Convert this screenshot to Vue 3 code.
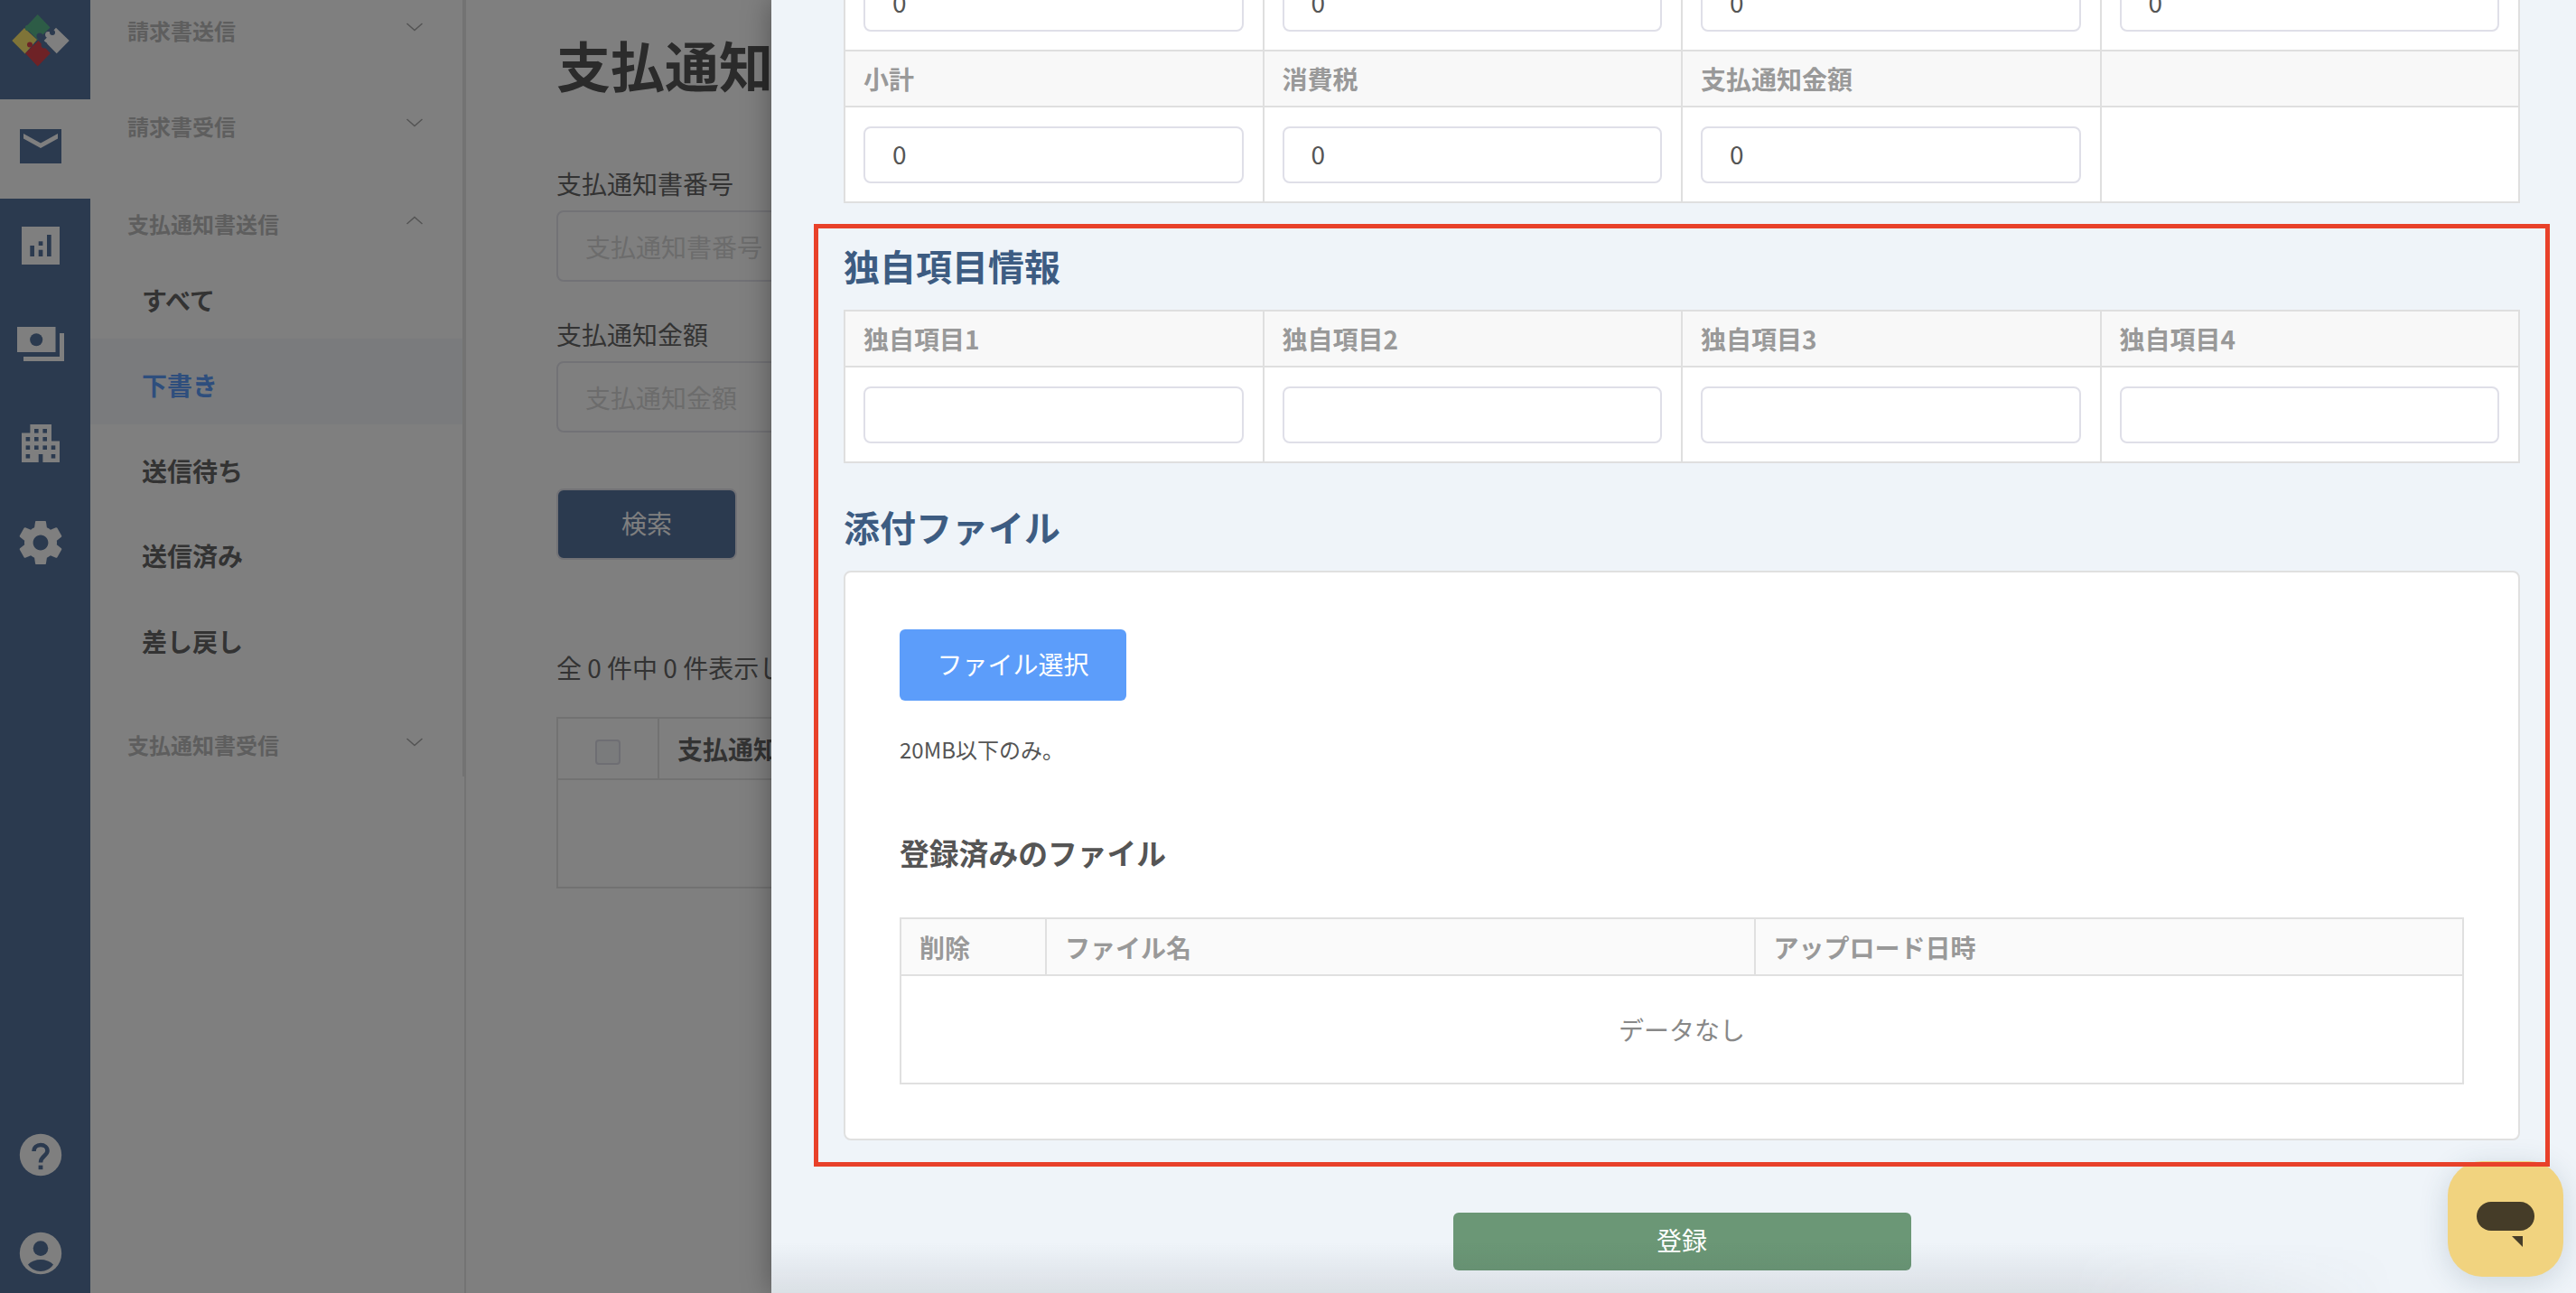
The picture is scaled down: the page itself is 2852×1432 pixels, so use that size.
<script setup>
const navGroups = [
  { title: '請求書送信', open: false },
  { title: '請求書受信', open: false },
  {
    title: '支払通知書送信',
    open: true,
    items: [
      { label: 'すべて' },
      { label: '下書き', active: true },
      { label: '送信待ち' },
      { label: '送信済み' },
      { label: '差し戻し' },
    ],
  },
  { title: '支払通知書受信', open: false },
]

const totals = [
  { label: '小計', value: '0' },
  { label: '消費税', value: '0' },
  { label: '支払通知金額', value: '0' },
]

const customFields = ['独自項目1', '独自項目2', '独自項目3', '独自項目4']

const buildingWindows = [
  [38, 475], [47.4, 475],
  [28.6, 484], [38, 484], [47.4, 484],
  [28.6, 493.4], [38, 493.4], [47.4, 493.4], [56.7, 493.4],
  [28.6, 503], [56.7, 503],
]

const gearPath =
  'M19.43 12.98c.04-.32.07-.64.07-.98s-.03-.66-.07-.98l2.11-1.65c.19-.15.24-.42.12-.64l-2-3.46c-.12-.22-.39-.3-.61-.22l-2.49 1c-.52-.4-1.08-.73-1.69-.98l-.38-2.65C14.46 2.18 14.25 2 14 2h-4c-.25 0-.46.18-.49.42l-.38 2.65c-.61.25-1.17.59-1.69.98l-2.49-1c-.23-.09-.49 0-.61.22l-2 3.46c-.13.22-.07.49.12.64l2.11 1.65c-.04.32-.07.65-.07.98s.03.66.07.98l-2.11 1.65c-.19.15-.24.42-.12.64l2 3.46c.12.22.39.3.61.22l2.49-1c.52.4 1.08.73 1.69.98l.38 2.65c.03.24.24.42.49.42h4c.25 0 .46-.18.49-.42l.38-2.65c.61-.25 1.17-.59 1.69-.98l2.49 1c.23.09.49 0 .61-.22l2-3.46c.12-.22.07-.49-.12-.64l-2.11-1.65zM12 15.5c-1.93 0-3.5-1.57-3.5-3.5s1.57-3.5 3.5-3.5 3.5 1.57 3.5 3.5-1.57 3.5-3.5 3.5z'
</script>

<template>
  <div class="page">
    <aside class="sidebar">
      <div class="side-item">
        <svg viewBox="5 11 80 80" width="80" height="80">
          <polygon points="41.7,16 55.5,30.5 41.7,44 28,30.5" fill="#5ab98c" />
          <polygon points="27,31 41,44 27.7,59.5 13.3,45" fill="#ffe870" />
          <polygon points="42.5,45 55.8,59 41.7,73.5 28,59" fill="#dc444c" />
          <polygon points="62,30.7 76.7,45 62.7,59.3 48.7,45" fill="#fff" />
          <circle cx="33" cy="49.5" r="3" fill="#dc444c" />
          <circle cx="44" cy="40" r="3.6" fill="#56749e" />
          <circle cx="53.5" cy="38.5" r="3.4" fill="#fff" />
          <circle cx="58" cy="36" r="3" fill="#56749e" />
          <circle cx="49" cy="50" r="3.4" fill="#56749e" />
          <circle cx="31" cy="31" r="3.2" fill="#5ab98c" />
        </svg>
      </div>
      <div class="side-item current">
        <svg viewBox="5 121 80 80" width="80" height="80">
          <rect x="22" y="143" width="46" height="38" fill="#56749e" />
          <polygon points="26,148 45,158.5 64,148 64,153.5 45,164 26,153.5" fill="#fff" />
        </svg>
      </div>
      <div class="side-item">
        <svg viewBox="5 231 80 80" width="80" height="80">
          <rect x="24" y="251" width="42" height="42" fill="#fff" />
          <g fill="#56749e">
            <rect x="33.3" y="272" width="4.7" height="12" />
            <rect x="42.7" y="267.3" width="4.7" height="4.7" />
            <rect x="42.7" y="276.7" width="4.7" height="7.3" />
            <rect x="52" y="260" width="4.7" height="24" />
          </g>
        </svg>
      </div>
      <div class="side-item">
        <svg viewBox="5 341 80 80" width="80" height="80">
          <rect x="19" y="362" width="42.5" height="28" fill="#fff" />
          <circle cx="40.2" cy="376.2" r="7" fill="#56749e" />
          <path d="M66 369h5v31H26v-5h40z" fill="#fff" />
        </svg>
      </div>
      <div class="side-item">
        <svg viewBox="5 451 80 80" width="80" height="80">
          <path d="M33.4 470H57v18.6h9V512H47.4v-9h-4.7v9H24v-32.4h9.4z" fill="#fff" />
          <rect
            v-for="w in buildingWindows"
            :key="w.join()"
            :x="w[0]"
            :y="w[1]"
            width="4.6"
            height="4.6"
            fill="#56749e"
          />
        </svg>
      </div>
      <div class="side-item">
        <svg viewBox="5 561 80 80" width="80" height="80">
          <path transform="translate(16.2 572.2) scale(2.4)" :d="gearPath" fill="#fff" />
        </svg>
      </div>
      <div class="side-foot">
        <svg viewBox="5 1239 80 80" width="80" height="80">
          <circle cx="45" cy="1279" r="23.2" fill="#fff" />
          <path
            d="M37.5 1275c0-4.2 3.3-7 7.5-7s7.5 2.8 7.5 6.6c0 5.4-7.5 5.6-7.5 12.9"
            fill="none"
            stroke="#56749e"
            stroke-width="4.6"
          />
          <rect x="42.6" y="1290.6" width="4.8" height="4.6" fill="#56749e" />
        </svg>
        <svg viewBox="5 1348 80 80" width="80" height="80">
          <circle cx="45" cy="1388" r="23.2" fill="#fff" />
          <circle cx="45" cy="1382.6" r="8.3" fill="#56749e" />
          <path
            d="M31 1400.5c3.5-3.6 8.7-5.5 14-5.5s10.500 1.900 14 5.500c-3.300 4.700-8.300 7.500-14 7.500s-10.700-2.800-14-7.500z"
            fill="#56749e"
          />
        </svg>
      </div>
    </aside>

    <nav class="nav">
      <div class="nav-list">
        <section v-for="group in navGroups" :key="group.title" class="nav-group">
          <div class="nav-head">
            <span>{{ group.title }}</span>
            <svg class="chev" viewBox="0 0 18 10" width="18" height="10">
              <polyline
                :points="group.open ? '0.5,9 9,1.500 17.500,9' : '0.5,1 9,8.500 17.500,1'"
                fill="none"
                stroke="#a8a8a8"
                stroke-width="1.500"
              />
            </svg>
          </div>
          <a
            v-for="item in group.items"
            :key="item.label"
            class="nav-item"
            :class="{ active: item.active }"
          >{{ item.label }}</a>
        </section>
      </div>
    </nav>

    <main class="main">
      <h1>支払通知書</h1>
      <label class="field-label">支払通知書番号</label>
      <input class="search-input" placeholder="支払通知書番号" />
      <label class="field-label second">支払通知金額</label>
      <input class="search-input" placeholder="支払通知金額" />
      <button class="search-btn" type="button">検索</button>
      <p class="count">全 0 件中 0 件表示しています</p>
      <table class="list-table">
        <thead>
          <tr>
            <th class="check-col"><span class="check"></span></th>
            <th>支払通知書番号</th>
          </tr>
        </thead>
        <tbody>
          <tr><td colspan="2"></td></tr>
        </tbody>
      </table>
    </main>

    <div class="scrim"></div>

    <div class="drawer">
      <table class="grid-table totals">
        <tbody>
          <tr>
            <td v-for="n in 4" :key="n" class="cell first"><input class="cell-input" value="0" /></td>
          </tr>
          <tr>
            <th v-for="t in totals" :key="t.label">{{ t.label }}</th>
            <th></th>
          </tr>
          <tr>
            <td v-for="t in totals" :key="t.label" class="cell"><input class="cell-input" :value="t.value" /></td>
            <td class="cell"></td>
          </tr>
        </tbody>
      </table>

      <div class="highlight">
        <h2>独自項目情報</h2>
        <table class="grid-table">
          <tbody>
            <tr>
              <th v-for="f in customFields" :key="f">{{ f }}</th>
            </tr>
            <tr>
              <td v-for="f in customFields" :key="f" class="cell"><input class="cell-input" /></td>
            </tr>
          </tbody>
        </table>

        <h2 class="attach-title">添付ファイル</h2>
        <div class="attach-card">
          <button class="pick-btn" type="button">ファイル選択</button>
          <p class="note">20MB以下のみ。</p>
          <h3>登録済みのファイル</h3>
          <table class="file-table">
            <thead>
              <tr>
                <th class="del-col">削除</th>
                <th>ファイル名</th>
                <th>アップロード日時</th>
              </tr>
            </thead>
            <tbody>
              <tr><td colspan="3">データなし</td></tr>
            </tbody>
          </table>
        </div>
      </div>

      <button class="save-btn" type="button">登録</button>
      <div class="bottom-fade"></div>
    </div>

    <button class="chat" type="button" aria-label="chat">
      <svg viewBox="0 0 64 50" width="64" height="50">
        <rect x="0" y="0" width="64" height="32" rx="16" fill="#453c28" />
        <polygon points="39,38 51,38 51,50" fill="#453c28" />
      </svg>
    </button>
  </div>
</template>

<style>
html,
body {
  margin: 0;
  height: 100%;
  overflow: hidden;
}
</style>

<style scoped>
.page {
  position: relative;
  display: flex;
  width: 2852px;
  height: 1432px;
  overflow: hidden;
  background: #fff;
  font-family: 'Noto Sans CJK JP', 'Noto Sans', sans-serif;
}

.sidebar {
  width: 100px;
  flex: none;
  display: flex;
  flex-direction: column;
  background: #56749e;
}

.side-item {
  height: 110px;
  box-sizing: border-box;
  padding: 11px 0 0 5px;
}

.side-item svg,
.side-foot svg {
  display: block;
}

.side-item.current {
  background: #fff;
}

.side-foot {
  margin-top: auto;
  padding: 0 0 4px 5px;
  display: flex;
  flex-direction: column;
  gap: 29px;
}

.nav {
  width: 416px;
  flex: none;
  box-sizing: border-box;
  border-right: 2px solid #e6e6e6;
}

.nav-list {
  height: 860px;
  box-sizing: border-box;
  padding-top: 3px;
  border-right: 2px solid #e6e6e6;
}

.nav-group {
  margin-bottom: 42px;
}

.nav-group:nth-child(2) {
  margin-bottom: 44px;
}

.nav-head {
  height: 64px;
  box-sizing: border-box;
  display: flex;
  align-items: center;
  justify-content: space-between;
  padding: 0 44px 4px 41px;
  font-size: 24px;
  font-weight: 700;
  color: #bcbcbc;
}

.chev {
  margin-bottom: 6px;
}

.nav-item {
  display: block;
  height: 94.4px;
  line-height: 103px;
  padding-left: 57px;
  font-size: 28px;
  font-weight: 700;
  color: #666;
}

.nav-item.active {
  background: #f4f6fa;
  color: #5c9dfa;
}

.main {
  flex: 1;
  padding: 31px 0 0 100px;
}

h1 {
  margin: 0 0 72px;
  font-size: 60px;
  line-height: 80px;
  font-weight: 700;
  color: #565656;
}

.field-label {
  display: block;
  font-size: 28px;
  line-height: 40px;
  color: #666;
}

.field-label.second {
  margin-top: 38px;
}

.search-input {
  display: block;
  box-sizing: border-box;
  width: 640px;
  height: 79px;
  margin-top: 10px;
  padding: 0 30px;
  border: 2px solid #e4e4ec;
  border-radius: 8px;
  font: inherit;
  font-size: 28px;
  background: #fff;
}

.search-input::placeholder {
  color: #d8d8d8;
  opacity: 1;
}

.search-btn {
  display: block;
  width: 200px;
  height: 79px;
  margin-top: 62px;
  padding: 0 0 4px;
  border: 2px solid #e4e4ec;
  border-radius: 8px;
  background: #56749e;
  color: #fff;
  font: inherit;
  font-size: 28px;
}

.count {
  margin: 99px 0 0;
  font-size: 28px;
  line-height: 40px;
  color: #666;
}

.list-table {
  margin-top: 35px;
  width: 900px;
  border-collapse: collapse;
  table-layout: fixed;
}

.list-table th,
.list-table td {
  border: 2px solid #e4e4e4;
  text-align: left;
  font-size: 28px;
  color: #666;
}

.list-table th {
  height: 66px;
  padding: 0 20px;
}

.list-table td {
  height: 116px;
}

.check-col {
  width: 110px;
}

.list-table th.check-col {
  padding: 0;
  text-align: center;
}

.check {
  display: inline-block;
  width: 28px;
  height: 28px;
  box-sizing: border-box;
  border: 2px solid #dcdce6;
  border-radius: 4px;
  background: #f4f6f8;
  vertical-align: middle;
}

.scrim {
  position: absolute;
  inset: 0;
  background: rgba(0, 0, 0, 0.5);
}

.drawer {
  position: absolute;
  top: 0;
  right: 0;
  bottom: 0;
  width: 1998px;
  box-sizing: border-box;
  padding: 0 62px 0 80px;
  background: #eff4f9;
  box-shadow: 0 0 30px rgba(0, 0, 0, 0.35);
  overflow: hidden;
}

.grid-table {
  width: 100%;
  border-collapse: collapse;
  table-layout: fixed;
  background: #fff;
}

.grid-table th,
.grid-table td {
  border: 2px solid #dfdfdf;
}

.grid-table th {
  height: 60px;
  padding: 0 20px;
  background: #f8f8f8;
  text-align: left;
  font-size: 28px;
  font-weight: 700;
  color: #999;
}

.grid-table .cell {
  height: 104px;
  padding: 0 21px 0 20px;
}

.totals {
  margin-top: -51px;
}

.cell-input {
  display: block;
  box-sizing: border-box;
  width: 100%;
  height: 63px;
  padding: 0 30px 3px;
  border: 2px solid #dfdfe8;
  border-radius: 8px;
  background: #fff;
  font: inherit;
  font-size: 28px;
  color: #555;
}

.highlight {
  position: relative;
  z-index: 2;
  margin: 23px -33px 0 -33px;
  padding: 11px 28px 24px 28px;
  border: 5px solid #e8412a;
}

h2 {
  margin: 0 0 19px;
  font-size: 40px;
  line-height: 60px;
  font-weight: 700;
  color: #3d5c82;
}

.attach-title {
  margin-top: 40px;
}

.attach-card {
  box-sizing: border-box;
  padding: 63px 60px 60px;
  border: 2px solid #e0e0e0;
  border-radius: 8px;
  background: #fff;
}

.pick-btn {
  display: block;
  width: 251px;
  height: 79px;
  padding: 0 0 4px;
  border: none;
  border-radius: 6px;
  background: #5c9dfa;
  color: #fff;
  font: inherit;
  font-size: 28px;
}

.note {
  margin: 36px 0 0;
  font-size: 24px;
  line-height: 36px;
  color: #555;
}

h3 {
  margin: 72px 0 48px;
  font-size: 32.8px;
  line-height: 48px;
  font-weight: 700;
  color: #555;
}

.file-table {
  width: 100%;
  border-collapse: collapse;
  table-layout: fixed;
}

.file-table th,
.file-table td {
  border: 2px solid #e0e0e0;
}

.file-table th {
  height: 61px;
  padding: 0 20px;
  background: #fafafa;
  text-align: left;
  font-size: 28px;
  font-weight: 700;
  color: #999;
}

.file-table th.del-col {
  width: 119px;
}

.file-table td {
  height: 116px;
  text-align: center;
  font-size: 28px;
  color: #888;
}

.save-btn {
  display: block;
  width: 507px;
  height: 64px;
  margin: 51px auto 0;
  padding: 0 0 4px;
  border: none;
  border-radius: 6px;
  background: #6b9776;
  color: #fff;
  font: inherit;
  font-size: 28px;
}

.bottom-fade {
  position: absolute;
  left: 0;
  bottom: 0;
  width: 1800px;
  height: 56px;
  background: linear-gradient(to top, rgba(40, 50, 60, 0.1), rgba(40, 50, 60, 0));
  -webkit-mask-image: linear-gradient(to right, #000 80%, transparent);
  mask-image: linear-gradient(to right, #000 80%, transparent);
}

.chat {
  position: absolute;
  right: 14px;
  bottom: 18px;
  z-index: 1;
  width: 128px;
  height: 128px;
  padding: 12px 0 0;
  border: none;
  border-radius: 38px;
  background: #f1d37f;
  box-shadow: 0 6px 32px rgba(40, 70, 90, 0.18);
}

.chat svg {
  display: block;
  margin: 0 auto;
}
</style>
